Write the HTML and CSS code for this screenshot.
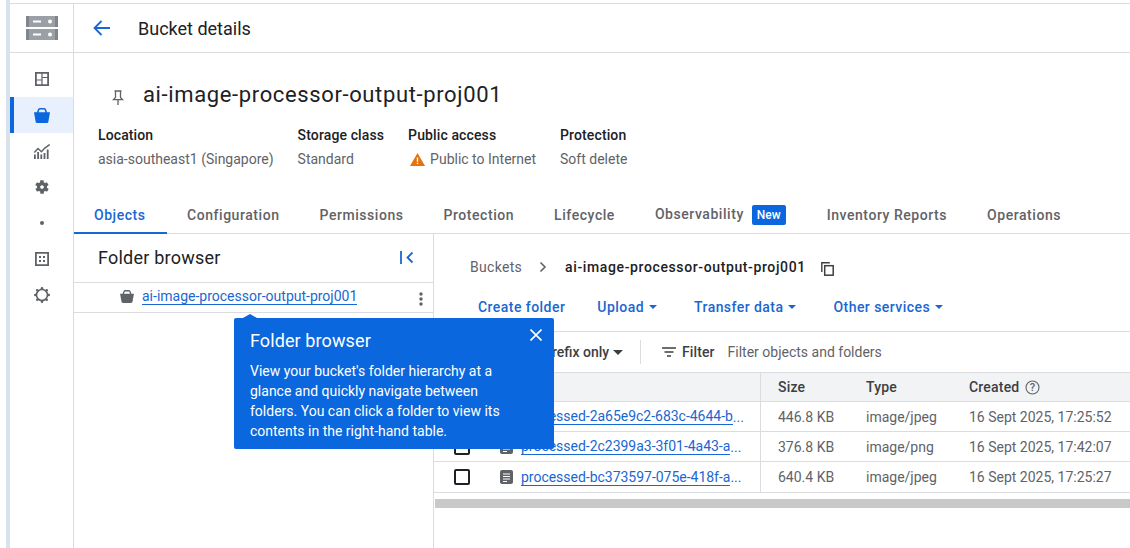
FILE: index.html
```html
<!DOCTYPE html>
<html lang="en">
<head>
<meta charset="utf-8">
<title>Bucket details</title>
<link rel="stylesheet" href="styles.css">
</head>
<body>
<div class="app">
  <div class="edge"></div>
  <div class="shell">
    <nav class="nav">
      <div class="nav-logo">
        <svg width="32" height="24" viewBox="0 0 32 24"><rect y="0" width="32" height="11" fill="#9aa0a6"/><rect y="13" width="32" height="11" fill="#9aa0a6"/><rect x="0" y="0" width="3" height="11" fill="#80868b"/><rect x="29" y="0" width="3" height="11" fill="#80868b"/><rect x="0" y="13" width="3" height="11" fill="#80868b"/><rect x="29" y="13" width="3" height="11" fill="#80868b"/><rect x="7" y="4.500" width="8" height="2" fill="#fff"/><circle cx="24" cy="5.500" r="2" fill="#fff"/><rect x="7" y="17.500" width="8" height="2" fill="#fff"/><circle cx="24" cy="18.500" r="2" fill="#fff"/></svg>
      </div>
      <div class="nav-items">
        <div class="nav-item"><svg width="14" height="14" viewBox="0 0 14 14"><path fill="none" stroke="#5f6368" stroke-width="1.800" d="M.9.900h12.200v12.200H.9z"/><path fill="none" stroke="#5f6368" stroke-width="1.200" d="M7 1v12M1 8h6M7 5.500h6"/></svg></div>
        <div class="nav-item active"><svg width="16" height="15" viewBox="0 0 16 15"><path fill="none" stroke="#0b67dd" stroke-width="1.600" d="M3.600 5 4.400 2.200C4.600 1.300 5.200.8 6 .8h4c.8 0 1.400.5 1.600 1.400L12.400 5"/><path fill="#0b67dd" d="M0 4.200h16l-1.600 9.200c-.1.900-.9 1.600-1.800 1.600H3.400c-.9 0-1.700-.7-1.800-1.600z"/></svg></div>
        <div class="nav-item"><svg width="16" height="15" viewBox="0 0 16 15"><path fill="#5f6368" d="M0 10.500h1.800V15H0zm3.200-2.500H5v7H3.200zm3.200 2.500h1.800V15H6.400zm3.200-1.500h1.800v6H9.600zm3.200-3.500h1.800V15h-1.800z"/><path fill="none" stroke="#5f6368" stroke-width="1.500" d="M.3 8.500 4 4.500l3.500 3.200 3-3.400L15.700.5"/></svg></div>
        <div class="nav-item"><svg width="16" height="16" viewBox="0 0 24 24"><path fill="#5f6368" d="M19.400 13c0-.3.100-.6.100-1s0-.7-.1-1l2.100-1.600c.2-.2.200-.4.100-.6l-2-3.500c-.1-.2-.4-.3-.6-.2l-2.500 1c-.5-.4-1.100-.7-1.700-1l-.4-2.700c0-.2-.2-.4-.5-.4h-4c-.3 0-.5.200-.5.400l-.4 2.700c-.6.300-1.200.6-1.700 1l-2.500-1c-.2-.1-.5 0-.6.200l-2 3.500c-.1.200-.1.400.1.600L4.600 11c0 .3-.1.700-.1 1s0 .7.1 1l-2.100 1.600c-.2.200-.2.400-.1.600l2 3.500c.1.200.4.300.6.200l2.500-1c.5.400 1.100.7 1.700 1l.4 2.700c0 .2.200.4.500.4h4c.3 0 .5-.2.500-.4l.4-2.700c.6-.3 1.200-.6 1.700-1l2.500 1c.2.100.5 0 .6-.2l2-3.500c.1-.2.100-.4-.1-.6zM12 14.800c-1.500 0-2.800-1.300-2.800-2.800s1.300-2.800 2.800-2.800 2.800 1.300 2.800 2.800-1.300 2.800-2.800 2.800z"/></svg></div>
        <div class="nav-item"><span class="nav-dot"></span></div>
        <div class="nav-item"><svg width="14" height="14" viewBox="0 0 14 14"><path fill="none" stroke="#5f6368" stroke-width="1.800" d="M.9.900h12.200v12.200H.9z"/><path fill="#5f6368" d="M4 4h2v2H4zm4 0h2v2H8zM4 8h2v2H4zm4 0h2v2H8z"/></svg></div>
        <div class="nav-item"><svg width="16" height="16" viewBox="0 0 16 16"><circle cx="8" cy="8" r="5.500" fill="none" stroke="#5f6368" stroke-width="1.600"/><g fill="#5f6368"><circle cx="8" cy="1.300" r="1.300"/><circle cx="8" cy="14.700" r="1.300"/><circle cx="1.300" cy="8" r="1.300"/><circle cx="14.700" cy="8" r="1.300"/><circle cx="3.300" cy="3.300" r="1.300"/><circle cx="12.700" cy="3.300" r="1.300"/><circle cx="3.300" cy="12.700" r="1.300"/><circle cx="12.700" cy="12.700" r="1.300"/></g></svg></div>
      </div>
    </nav>
    <main class="main">
      <header class="page-head">
        <svg class="back" width="18" height="16" viewBox="0 0 18 16"><path fill="none" stroke="#1967d2" stroke-width="1.800" d="M17 8H2M8.500 1 1.500 8l7 7"/></svg>
        <h1 class="page-title">Bucket details</h1>
      </header>
      <section class="summary">
        <div class="title-row">
          <svg class="pin" width="12" height="15" viewBox="0 0 12 15"><path fill="none" stroke="#5f6368" stroke-width="1.300" d="M2.500 1h7M3.500 1v6.500L1.500 9.600h9L8.500 7.500V1M6 9.600V15"/></svg>
          <h2 class="bucket-name">ai-image-processor-output-proj001</h2>
        </div>
        <div class="meta">
          <div class="meta-col"><div class="meta-label">Location</div><div class="meta-value">asia-southeast1 (Singapore)</div></div>
          <div class="meta-col"><div class="meta-label">Storage class</div><div class="meta-value">Standard</div></div>
          <div class="meta-col"><div class="meta-label">Public access</div><div class="meta-value warn"><svg width="15" height="13" viewBox="0 0 15 13"><path fill="#e8710a" d="M7.500 0 15 13H0z"/><path fill="#fff" d="M6.800 4.500h1.400v4.300H6.800zm0 5.200h1.400v1.400H6.800z"/></svg>Public to Internet</div></div>
          <div class="meta-col"><div class="meta-label">Protection</div><div class="meta-value">Soft delete</div></div>
        </div>
      </section>
      <div class="tabs">
        <div class="tab on">Objects</div>
        <div class="tab">Configuration</div>
        <div class="tab">Permissions</div>
        <div class="tab">Protection</div>
        <div class="tab">Lifecycle</div>
        <div class="tab up">Observability<span class="badge">New</span></div>
        <div class="tab">Inventory Reports</div>
        <div class="tab">Operations</div>
      </div>
      <div class="body">
        <aside class="folders">
          <div class="folders-head">
            <span>Folder browser</span>
            <svg width="14" height="13" viewBox="0 0 14 13"><path fill="none" stroke="#1967d2" stroke-width="1.800" d="M1 0v13M12.500 1.500l-5 5 5 5"/></svg>
          </div>
          <div class="folder-row">
            <svg width="14" height="13" viewBox="0 0 16 15"><path fill="none" stroke="#5f6368" stroke-width="1.600" d="M3.600 5 4.400 2.200C4.600 1.300 5.200.8 6 .8h4c.8 0 1.400.5 1.600 1.400L12.400 5"/><path fill="#5f6368" d="M0 4.200h16l-1.600 9.200c-.1.900-.9 1.600-1.800 1.600H3.400c-.9 0-1.700-.7-1.800-1.600z"/></svg>
            <a class="link">ai-image-processor-output-proj001</a>
            <svg class="kebab" width="4" height="14" viewBox="0 0 4 14"><circle cx="2" cy="2" r="1.700" fill="#5f6368"/><circle cx="2" cy="7" r="1.700" fill="#5f6368"/><circle cx="2" cy="12" r="1.700" fill="#5f6368"/></svg>
          </div>
        </aside>
        <section class="objects">
          <div class="crumbs">
            <span class="crumb">Buckets</span>
            <svg class="crumb-sep" width="8" height="12" viewBox="0 0 8 12"><path fill="none" stroke="#5f6368" stroke-width="1.600" d="M1.500 1.500 6 6l-4.500 4.500"/></svg>
            <span class="crumb-now">ai-image-processor-output-proj001</span>
            <svg class="copy" width="13" height="14" viewBox="0 0 13 14"><path fill="none" stroke="#3c4043" stroke-width="1.400" d="M.8 10V.8h8"/><rect x="3.700" y="3.700" width="8.500" height="9.500" fill="none" stroke="#3c4043" stroke-width="1.500"/></svg>
          </div>
          <div class="actions">
            <span class="action">Create folder</span>
            <span class="action">Upload<i class="caret"></i></span>
            <span class="action">Transfer data<i class="caret"></i></span>
            <span class="action">Other services<i class="caret"></i></span>
          </div>
          <div class="filter">
            <span class="prefix">Filter by name prefix only<i class="caret dark"></i></span>
            <span class="filter-sep"></span>
            <svg width="14" height="10" viewBox="0 0 14 10"><path fill="none" stroke="#3c4043" stroke-width="1.400" d="M0 1h14M2.500 5h9M5 9h4"/></svg>
            <strong class="filter-label">Filter</strong>
            <span class="filter-hint">Filter objects and folders</span>
          </div>
          <div class="table">
            <div class="row head">
              <div class="cell name-cell"></div>
              <div class="cell size">Size</div>
              <div class="cell type">Type</div>
              <div class="cell created">Created
                <svg width="15" height="15" viewBox="0 0 15 15"><circle cx="7.500" cy="7.500" r="6.500" fill="none" stroke="#5f6368" stroke-width="1.100"/><text x="7.500" y="11" text-anchor="middle" class="help">?</text></svg>
              </div>
            </div>
            <div class="row">
              <div class="cell name-cell"><i class="check"></i><svg class="doc" width="13" height="14" viewBox="0 0 13 14"><rect width="13" height="14" rx="2" fill="#5f6368"/><path stroke="#fff" stroke-width="1" d="M3 4h7M3 6.500h7M3 9h7M3 11.500h4"/></svg><a class="link trunc">processed-2a65e9c2-683c-4644-b</a><span class="more">...</span></div>
              <div class="cell size">446.8 KB</div><div class="cell type">image/jpeg</div><div class="cell created">16 Sept 2025, 17:25:52</div>
            </div>
            <div class="row">
              <div class="cell name-cell"><i class="check"></i><svg class="doc" width="13" height="14" viewBox="0 0 13 14"><rect width="13" height="14" rx="2" fill="#5f6368"/><path stroke="#fff" stroke-width="1" d="M3 4h7M3 6.500h7M3 9h7M3 11.500h4"/></svg><a class="link trunc">processed-2c2399a3-3f01-4a43-a</a><span class="more">...</span></div>
              <div class="cell size">376.8 KB</div><div class="cell type">image/png</div><div class="cell created">16 Sept 2025, 17:42:07</div>
            </div>
            <div class="row last">
              <div class="cell name-cell"><i class="check"></i><svg class="doc" width="13" height="14" viewBox="0 0 13 14"><rect width="13" height="14" rx="2" fill="#5f6368"/><path stroke="#fff" stroke-width="1" d="M3 4h7M3 6.500h7M3 9h7M3 11.500h4"/></svg><a class="link trunc">processed-bc373597-075e-418f-a</a><span class="more">...</span></div>
              <div class="cell size">640.4 KB</div><div class="cell type">image/jpeg</div><div class="cell created">16 Sept 2025, 17:25:27</div>
            </div>
          </div>
          <div class="scrollbar"></div>
        </section>
        <div class="popover">
          <span class="popover-tip"></span>
          <svg class="popover-close" width="12" height="12" viewBox="0 0 12 12"><path stroke="#fff" stroke-width="1.600" d="M.5.500l11 11M11.500.5l-11 11"/></svg>
          <div class="popover-title">Folder browser</div>
          <p class="popover-text">View your bucket's folder hierarchy at a glance and quickly navigate between folders. You can click a folder to view its contents in the right-hand table.</p>
        </div>
      </div>
    </main>
  </div>
</div>
</body>
</html>
```

FILE: styles.css
```css
* { box-sizing: border-box; }
html, body { margin: 0; height: 100%; background: #fff; overflow: hidden; }
body { font-family: Roboto, "Liberation Sans", sans-serif; font-size: 14px; color: #202124; }
h1, h2, p { margin: 0; font-weight: 400; }
i { display: inline-block; font-style: normal; }

.app { display: flex; height: 548px; }
.edge { width: 10px; flex: none; border-left: 6px solid #fff; background: #d8e2ec; }
.shell { flex: 1; display: flex; min-width: 0; margin-top: 3px; border-top: 1px solid #dadce0; }

.nav { width: 64px; flex: none; border-right: 1px solid #dadce0; }
.nav-logo { height: 49px; display: flex; align-items: center; justify-content: center; border-bottom: 1px solid #dadce0; padding-bottom: 1px; }
.nav-items { padding-top: 8px; }
.nav-item { height: 36px; display: flex; align-items: center; justify-content: center; }
.nav-item.active { background: #e8f0fe; box-shadow: inset 4px 0 0 #0b67dd; }
.nav-dot { width: 4px; height: 4px; border-radius: 50%; background: #5f6368; }

.main { flex: 1; min-width: 0; display: flex; flex-direction: column; }
.page-head { height: 49px; flex: none; display: flex; align-items: center; padding-left: 19px; border-bottom: 1px solid #dadce0; }
.back { margin-right: 27px; }
.page-title { font-size: 18px; }

.summary { padding: 28px 0 0 24px; height: 133px; flex: none; }
.title-row { display: flex; align-items: center; height: 28px; padding-left: 14px; }
.pin { margin-right: 19px; margin-top: 5px; }
.bucket-name { font-size: 22px; line-height: 28px; letter-spacing: .63px; }
.meta { display: flex; gap: 24px; margin-top: 16px; }
.meta-label { font-weight: 500; line-height: 20px; letter-spacing: .12px; }
.meta-value { line-height: 20px; margin-top: 4px; color: #5f6368; }
.warn { display: flex; align-items: center; gap: 5px; padding-left: 2px; }

.tabs { height: 48px; flex: none; display: flex; border-bottom: 1px solid #dadce0; }
.tab { padding: 20px 20px 0; height: 47px; line-height: 18px; color: #5f6368; font-weight: 500; letter-spacing: .55px; display: flex; align-items: flex-start; }
.tab.on { color: #1967d2; box-shadow: inset 0 -2px 0 #1967d2; height: 48px; min-width: 93px; }
.tab.up { padding-top: 19px; padding-right: 21px; }
.badge { margin-left: 8px; background: #0b67dd; color: #fff; font-size: 12px; line-height: 20px; height: 20px; padding: 0 5px; border-radius: 2px; letter-spacing: 0; }

.body { flex: 1; display: flex; position: relative; min-height: 0; }
.folders { width: 360px; flex: none; border-right: 1px solid #dadce0; }
.folders-head { height: 49px; display: flex; align-items: center; justify-content: space-between; padding: 0 19px 2px 24px; border-bottom: 1px solid #dadce0; font-size: 18px; letter-spacing: .22px; }
.folder-row { height: 30px; display: flex; align-items: center; padding: 0 0 2px 46px; border-bottom: 1px solid #dadce0; gap: 8px; }
.link { color: #1967d2; text-decoration: none; border-bottom: 1px solid #1967d2; line-height: 16px; letter-spacing: 0; }
.kebab { margin-left: auto; margin-right: 10px; margin-top: 5px; }

.objects { flex: 1; min-width: 0; }
.crumbs { height: 64px; display: flex; align-items: center; padding: 2px 0 0 36px; }
.crumb { color: #5f6368; letter-spacing: .3px; }
.crumb-sep { margin: 0 18px 0 17px; }
.crumb-now { font-weight: 500; color: #202124; letter-spacing: .62px; margin-right: 15px; }
.copy { margin-top: 4px; }
.actions { height: 34px; display: flex; gap: 32px; padding-left: 44px; align-items: flex-start; border-bottom: 1px solid #dadce0; }
.action { color: #1967d2; font-weight: 500; letter-spacing: .45px; line-height: 18px; display: flex; align-items: center; }
.caret { width: 0; height: 0; border: 4px solid transparent; border-top: 4px solid #1967d2; border-bottom: 0; margin: 0 5px 0 5px; }
.caret.dark { border-width: 5px 5px 0; border-top-color: #3c4043; margin: 0 0 0 4px; }
.filter { height: 41px; display: flex; align-items: center; padding-left: 14px; border-bottom: 1px solid #dadce0; }
.prefix { font-weight: 500; color: #3c4043; display: flex; align-items: center; width: 192px; white-space: nowrap; padding-left: 4px; }
.filter-sep { width: 1px; height: 24px; background: #dadce0; margin-right: 21px; }
.filter-label { font-weight: 500; margin: 0 13px 0 6px; color: #3c4043; letter-spacing: .1px; }
.filter-hint { color: #5f6368; }

.row { display: grid; grid-template-columns: 327px 105px 103px 1fr; height: 30px; border-bottom: 1px solid #dadce0; }
.row.head { background: #f1f3f4; height: 29px; font-weight: 500; color: #3c4043; }
.row.last { height: 31px; }
.cell { display: flex; align-items: center; color: #5f6368; white-space: nowrap; }
.head .cell { color: #3c4043; letter-spacing: .2px; }
.name-cell { padding-left: 20px; border-right: 1px solid #dadce0; }
.size { padding-left: 17px; }
.created { gap: 6px; }
.check { width: 16px; height: 16px; border: 2px solid #202124; border-radius: 2px; margin-right: 30px; flex: none; }
.doc { margin-right: 8px; flex: none; }
.trunc { letter-spacing: -.02px; }
.more { color: #1967d2; }
.help { font-size: 11px; fill: #5f6368; font-family: Roboto, sans-serif; }
.scrollbar { height: 9px; margin: 6px 0 0 1px; background: #c9c9c9; }

.popover { position: absolute; left: 160px; top: 84px; width: 320px; height: 131px; background: #0b67dd; color: #fff; border-radius: 2px; padding: 11px 16px; }
.popover-tip { position: absolute; top: -4px; left: 9px; width: 0; height: 0; border: 7px solid transparent; border-top: 0; border-bottom: 4px solid #0b67dd; }
.popover-close { position: absolute; top: 11px; right: 12px; }
.popover-title { font-size: 18px; line-height: 24px; letter-spacing: .1px; }
.popover-text { margin-top: 8px; line-height: 20px; max-width: 270px; }
```
